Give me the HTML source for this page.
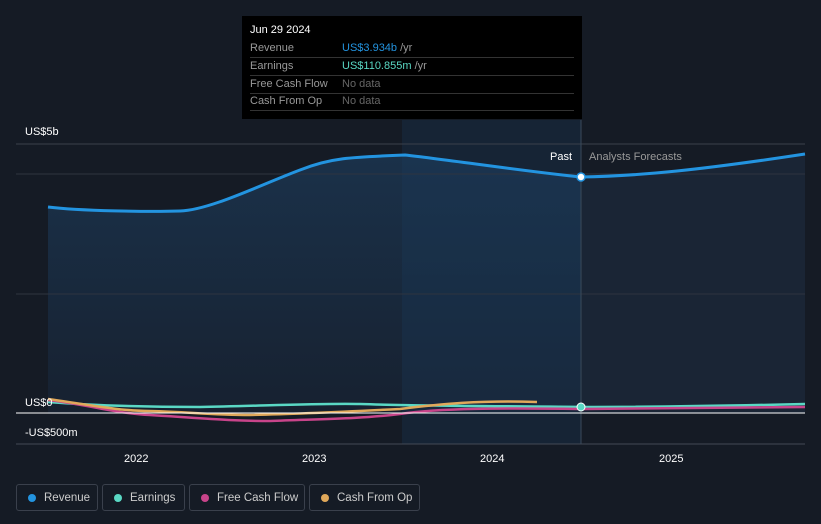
<!DOCTYPE html>
<html><head><meta charset="utf-8"><style>
html,body{margin:0;width:821px;height:524px;background:#151b25;font-family:"Liberation Sans",sans-serif;overflow:hidden;position:relative}
.tt{position:absolute;left:242px;top:16px;width:340px;height:103px;background:#000;color:#fff;font-size:11px}
.tt .r{position:absolute;left:8px;right:8px;height:17px;border-bottom:1px solid #333;line-height:17px;color:#999}
.tt .r span{position:absolute;left:92px}
.lg{position:absolute;top:484px;height:27px;border:1px solid #3a404c;border-radius:3px;color:#ccc;font-size:11.5px;line-height:26px;box-sizing:border-box;padding-left:27px;white-space:nowrap}
.lg i{position:absolute;left:11px;top:9px;width:8px;height:8px;border-radius:50%}
</style></head><body>
<svg width="821" height="524" style="position:absolute;left:0;top:0">
<defs><linearGradient id="g" x1="0" x2="0" y1="0" y2="1"><stop offset="0" stop-color="#1b3550"/><stop offset="1" stop-color="#172232"/></linearGradient></defs>
<path d="M48,207 C80,211 150,212 180,211 C210,210 260,185 300,170 C330,158 350,157 405,155 C450,160 530,172 581,177 L581,413 L48,413Z" fill="url(#g)" opacity="0.85"/>
<rect x="402" y="120" width="179" height="324" fill="#1a3d5c" opacity="0.3"/>
<path d="M581,177 C640,176 700,170 805,154 L805,413 L581,413Z" fill="#1a2535"/>
<line x1="16" y1="144" x2="805" y2="144" stroke="#3a404a"/>
<line x1="16" y1="174" x2="805" y2="174" stroke="#2e3440"/>
<line x1="16" y1="294" x2="805" y2="294" stroke="#2e3440"/>
<line x1="16" y1="444" x2="805" y2="444" stroke="#444a55"/>
<line x1="581" y1="120" x2="581" y2="444" stroke="#3a4a5a"/>
<path d="M48,207 C80,211 150,212 180,211 C210,210 260,185 300,170 C330,158 350,157 405,155 C450,160 530,172 581,177 C640,176 700,170 805,154" fill="none" stroke="#2394e0" stroke-width="3"/>
<path d="M48,402 C100,406 150,407 200,407 C260,406 320,403 360,404 C420,406 500,406 581,407 C650,407 720,406 805,404" fill="none" stroke="#5ad8c4" stroke-width="2.5"/>
<path d="M48,400 C90,405 120,414 150,415 C200,418 230,421 270,421 C320,419 360,419 400,414 C440,408 500,408 581,409 C650,409 720,408 805,407" fill="none" stroke="#c8448a" stroke-width="2.5"/>
<path d="M48,399 C90,405 120,411 150,411 C190,412 210,415 250,415 C300,414 360,411 400,409 C440,404 480,400 537,402" fill="none" stroke="#e0a85a" stroke-width="2.5"/>
<line x1="16" y1="413" x2="805" y2="413" stroke="#fff"/>
<circle cx="581" cy="177" r="4" fill="#fff" stroke="#2394e0" stroke-width="1.5"/>
<circle cx="581" cy="407" r="4" fill="#5ad8c4" stroke="#fff" stroke-width="1"/>
<g font-size="11" fill="#fff"><text x="25" y="135">US$5b</text><text x="25" y="406">US$0</text><text x="25" y="436">-US$500m</text>
<text x="124" y="462">2022</text><text x="302" y="462">2023</text><text x="480" y="462">2024</text><text x="659" y="462">2025</text>
<text x="550" y="160">Past</text><text x="589" y="160" fill="#999">Analysts Forecasts</text></g>
</svg>
<div class="tt">
<div style="position:absolute;left:8px;top:8px">Jun 29 2024</div>
<div class="r" style="top:24px">Revenue<span style="color:#2394e0">US$3.934b <b style="font-weight:normal;color:#999">/yr</b></span></div>
<div class="r" style="top:42px">Earnings<span style="color:#5ad8c4">US$110.855m <b style="font-weight:normal;color:#999">/yr</b></span></div>
<div class="r" style="top:60px">Free Cash Flow<span style="color:#666">No data</span></div>
<div class="r" style="top:77px">Cash From Op<span style="color:#666">No data</span></div>
</div>
<div class="lg" style="left:16px;width:82px"><i style="background:#2394e0"></i>Revenue</div>
<div class="lg" style="left:102px;width:83px"><i style="background:#5ad8c4"></i>Earnings</div>
<div class="lg" style="left:189px;width:116px"><i style="background:#c8448a"></i>Free Cash Flow</div>
<div class="lg" style="left:309px;width:111px"><i style="background:#e0a85a"></i>Cash From Op</div>
</body></html>
